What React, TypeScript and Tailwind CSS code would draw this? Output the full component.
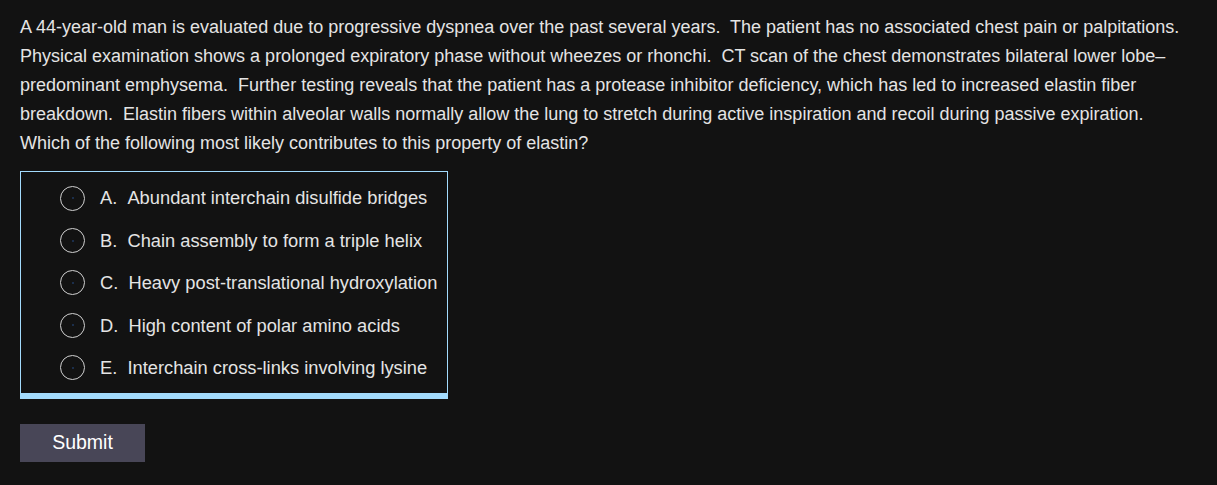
import React from "react";

const options = [
  "A.\u00a0\u00a0Abundant interchain disulfide bridges",
  "B.\u00a0\u00a0Chain assembly to form a triple helix",
  "C.\u00a0\u00a0Heavy post-translational hydroxylation",
  "D.\u00a0\u00a0High content of polar amino acids",
  "E.\u00a0\u00a0Interchain cross-links involving lysine",
];

export default function App() {
  return (
    <div
      className="min-h-[485px] w-full bg-[#121212] text-[#e4e4e4] px-[20px] pt-[13px]"
      style={{ fontFamily: '"Liberation Sans", Arial, sans-serif' }}
    >
      <p className="text-[18px] leading-[29px]">
        A 44-year-old man is evaluated due to progressive dyspnea over the past several years.&nbsp; The patient has no
        associated chest pain or palpitations.&nbsp; Physical examination shows a prolonged expiratory phase without
        wheezes or rhonchi.&nbsp; CT scan of the chest demonstrates bilateral lower lobe–predominant emphysema.&nbsp;
        Further testing reveals that the patient has a protease inhibitor deficiency, which has led to increased elastin
        fiber breakdown.&nbsp; Elastin fibers within alveolar walls normally allow the lung to stretch during active
        inspiration and recoil during passive expiration.&nbsp; Which of the following most likely contributes to this
        property of elastin?
      </p>
      <div className="mt-[13px] inline-flex flex-col border border-[#a3dbfd] border-b-[6px] pt-[5px] pb-[4px] pl-[39px] pr-[10px]">
        {options.map((o) => (
          <div key={o} className="flex h-[42.4px] items-center text-[18.3px]">
            <span className="relative mr-[15px] h-[25px] w-[25px] shrink-0 rounded-full border-[1.5px] border-[#d0d0d0]">
              <span className="absolute left-1/2 top-1/2 h-[1px] w-[1px] -translate-x-1/2 -translate-y-1/2 bg-[#3b82f6]" />
            </span>
            <span className="whitespace-nowrap">{o}</span>
          </div>
        ))}
      </div>
      <div className="mt-[25px]">
        <button className="h-[38px] w-[125px] bg-[#484657] text-[19.5px] text-white">Submit</button>
      </div>
    </div>
  );
}
